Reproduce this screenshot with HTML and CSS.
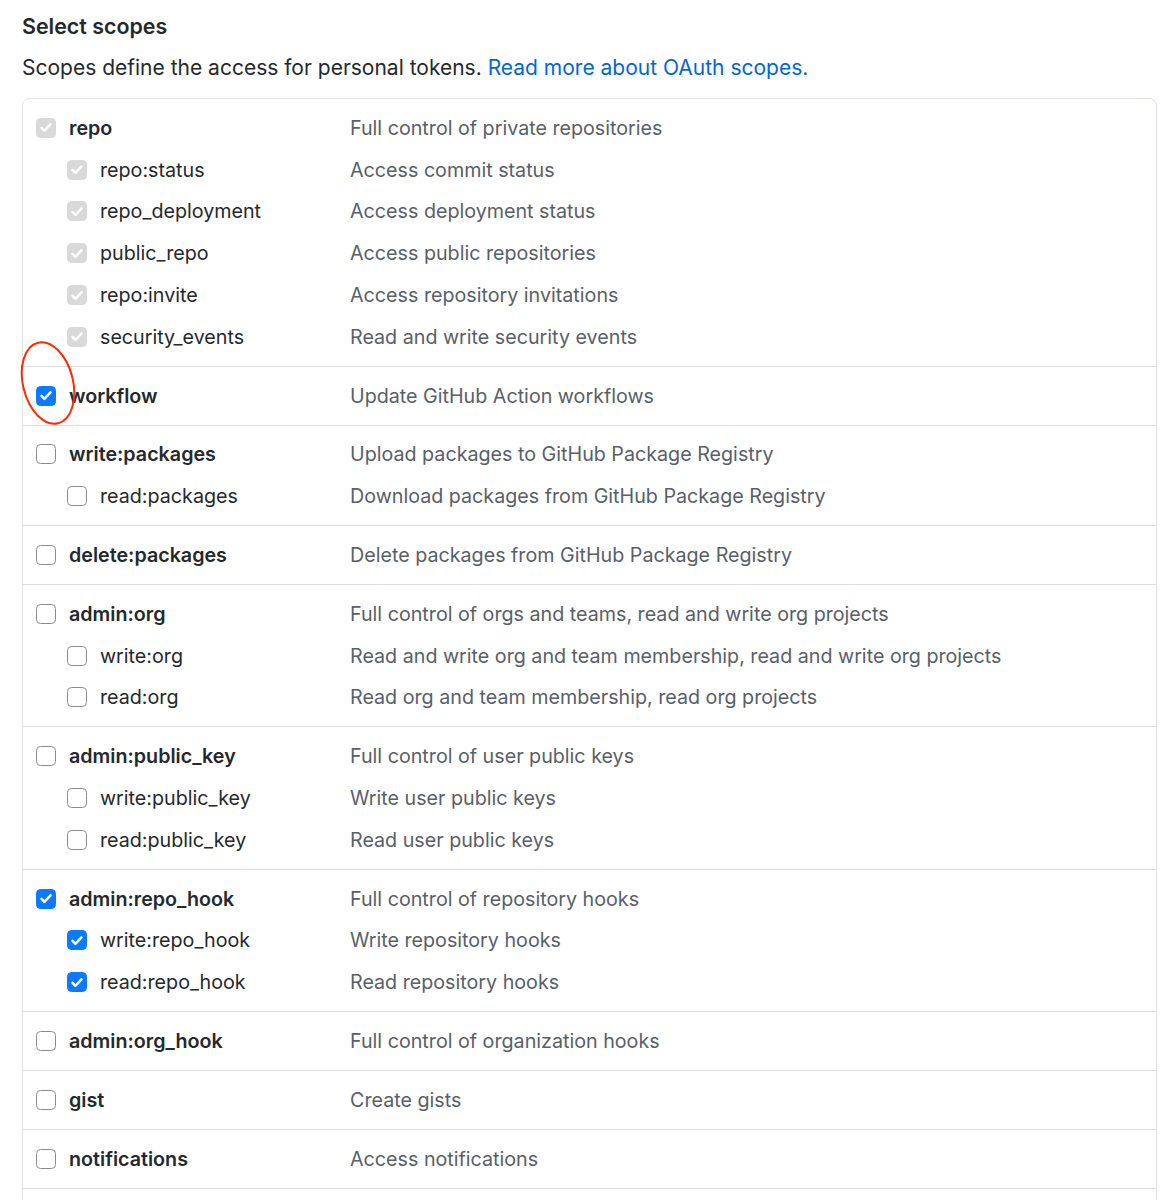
FILE: index.html
```html
<!DOCTYPE html>
<html lang="en">
<head>
<meta charset="utf-8">
<title>Select scopes</title>
<link rel="stylesheet" href="styles.css">
</head>
<body>
<div class="page">
  <h2 class="title">Select scopes</h2>
  <p class="note">Scopes define the access for personal tokens. <a href="#" class="link">Read more about OAuth scopes.</a></p>

  <div class="scopes">
    <ul class="group">
      <li class="row top"><span class="name"><span class="cb disabled"><svg viewBox="0 0 20 20"><path d="M5 10.5l3.2 3.2L15 6.5"/></svg></span>repo</span><span class="desc">Full control of private repositories</span></li>
      <li class="row sub"><span class="name"><span class="cb disabled"><svg viewBox="0 0 20 20"><path d="M5 10.5l3.2 3.2L15 6.5"/></svg></span>repo:status</span><span class="desc">Access commit status</span></li>
      <li class="row sub"><span class="name"><span class="cb disabled"><svg viewBox="0 0 20 20"><path d="M5 10.5l3.2 3.2L15 6.5"/></svg></span>repo_deployment</span><span class="desc">Access deployment status</span></li>
      <li class="row sub"><span class="name"><span class="cb disabled"><svg viewBox="0 0 20 20"><path d="M5 10.5l3.2 3.2L15 6.5"/></svg></span>public_repo</span><span class="desc">Access public repositories</span></li>
      <li class="row sub"><span class="name"><span class="cb disabled"><svg viewBox="0 0 20 20"><path d="M5 10.5l3.2 3.2L15 6.5"/></svg></span>repo:invite</span><span class="desc">Access repository invitations</span></li>
      <li class="row sub"><span class="name"><span class="cb disabled"><svg viewBox="0 0 20 20"><path d="M5 10.5l3.2 3.2L15 6.5"/></svg></span>security_events</span><span class="desc">Read and write security events</span></li>
    </ul>

    <ul class="group marked">
      <li class="row top"><span class="name"><span class="cb checked"><svg viewBox="0 0 20 20"><path d="M5 10.5l3.2 3.2L15 6.5"/></svg></span>workflow</span><span class="desc">Update GitHub Action workflows</span></li>
      <svg class="annotation" viewBox="0 0 70 100" aria-hidden="true"><ellipse cx="30" cy="48" rx="25" ry="41.5" transform="rotate(-14 30 48)"/></svg>
    </ul>

    <ul class="group">
      <li class="row top"><span class="name"><span class="cb"></span>write:packages</span><span class="desc">Upload packages to GitHub Package Registry</span></li>
      <li class="row sub"><span class="name"><span class="cb"></span>read:packages</span><span class="desc">Download packages from GitHub Package Registry</span></li>
    </ul>

    <ul class="group">
      <li class="row top"><span class="name"><span class="cb"></span>delete:packages</span><span class="desc">Delete packages from GitHub Package Registry</span></li>
    </ul>

    <ul class="group">
      <li class="row top"><span class="name"><span class="cb"></span>admin:org</span><span class="desc">Full control of orgs and teams, read and write org projects</span></li>
      <li class="row sub"><span class="name"><span class="cb"></span>write:org</span><span class="desc">Read and write org and team membership, read and write org projects</span></li>
      <li class="row sub"><span class="name"><span class="cb"></span>read:org</span><span class="desc">Read org and team membership, read org projects</span></li>
    </ul>

    <ul class="group">
      <li class="row top"><span class="name"><span class="cb"></span>admin:public_key</span><span class="desc">Full control of user public keys</span></li>
      <li class="row sub"><span class="name"><span class="cb"></span>write:public_key</span><span class="desc">Write user public keys</span></li>
      <li class="row sub"><span class="name"><span class="cb"></span>read:public_key</span><span class="desc">Read user public keys</span></li>
    </ul>

    <ul class="group">
      <li class="row top"><span class="name"><span class="cb checked"><svg viewBox="0 0 20 20"><path d="M5 10.5l3.2 3.2L15 6.5"/></svg></span>admin:repo_hook</span><span class="desc">Full control of repository hooks</span></li>
      <li class="row sub"><span class="name"><span class="cb checked"><svg viewBox="0 0 20 20"><path d="M5 10.5l3.2 3.2L15 6.5"/></svg></span>write:repo_hook</span><span class="desc">Write repository hooks</span></li>
      <li class="row sub"><span class="name"><span class="cb checked"><svg viewBox="0 0 20 20"><path d="M5 10.5l3.2 3.2L15 6.5"/></svg></span>read:repo_hook</span><span class="desc">Read repository hooks</span></li>
    </ul>

    <ul class="group">
      <li class="row top"><span class="name"><span class="cb"></span>admin:org_hook</span><span class="desc">Full control of organization hooks</span></li>
    </ul>

    <ul class="group">
      <li class="row top"><span class="name"><span class="cb"></span>gist</span><span class="desc">Create gists</span></li>
    </ul>

    <ul class="group">
      <li class="row top"><span class="name"><span class="cb"></span>notifications</span><span class="desc">Access notifications</span></li>
    </ul>

    <ul class="group">
      <li class="row top"><span class="name"><span class="cb"></span>user</span><span class="desc">Update all user data</span></li>
      <li class="row sub"><span class="name"><span class="cb"></span>read:user</span><span class="desc">Read all user profile data</span></li>
      <li class="row sub"><span class="name"><span class="cb"></span>user:email</span><span class="desc">Access user email addresses (read-only)</span></li>
    </ul>
  </div>
</div>
</body>
</html>
```

FILE: styles.css
```css
html, body {
  margin: 0;
  padding: 0;
  background: #ffffff;
}

body {
  font-family: Inter, "Noto Sans", "Liberation Sans", sans-serif;
  color: #24292e;
  font-size: 19.7px;
}

.page {
  padding: 11px 5px 0 22px;
}

.title {
  margin: 0;
  font-size: 21.4px;
  line-height: 30px;
  font-weight: 600;
  color: #24292e;
}

.note {
  margin: 12px 0 15px;
  font-size: 21px;
  line-height: 30px;
  color: #24292e;
}

.link {
  color: #0366d6;
  text-decoration: none;
}

.scopes {
  border: 1px solid #e1e4e8;
  border-radius: 8px;
  width: 1133px;
}

.group {
  list-style: none;
  margin: 0;
  padding: 8px 0;
  border-top: 1px solid #dcdce3;
  position: relative;
}

.group:first-child {
  border-top: 0;
}

.row {
  display: grid;
  grid-template-columns: 327px 1fr;
  align-items: center;
  height: 41.8px;
}

.name {
  display: flex;
  align-items: center;
  gap: 13px;
  padding-left: 13px;
  color: #24292e;
}

.top .name {
  font-weight: 600;
}

.sub .name {
  padding-left: 44px;
  font-weight: 400;
}

.desc {
  color: #586069;
}

.cb {
  width: 20px;
  height: 20px;
  box-sizing: border-box;
  border: 1.5px solid #8c8c8c;
  border-radius: 4.5px;
  background: #ffffff;
  flex: none;
  display: flex;
  align-items: center;
  justify-content: center;
}

.cb svg {
  width: 19px;
  height: 19px;
  fill: none;
  stroke: #ffffff;
  stroke-width: 2.8;
  stroke-linecap: round;
  stroke-linejoin: round;
}

.cb.checked {
  background: #0a7aff;
  border-color: #0a7aff;
}

.cb.disabled {
  background: #d9d9d9;
  border-color: #d9d9d9;
}

.annotation {
  position: absolute;
  left: -5px;
  top: -32px;
  width: 70px;
  height: 100px;
  overflow: visible;
  pointer-events: none;
}

.annotation ellipse {
  fill: none;
  stroke: #ff2a00;
  stroke-width: 2;
}
```
